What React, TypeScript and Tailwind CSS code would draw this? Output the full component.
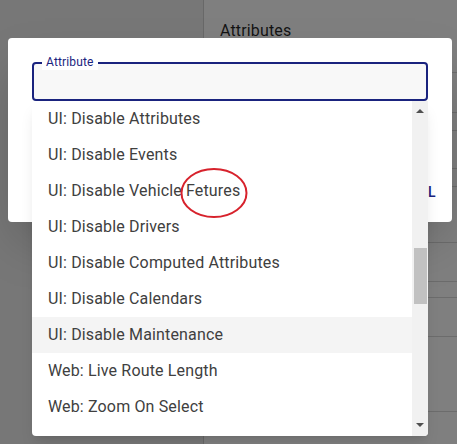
import React from "react";

const options = [
  "UI: Disable Attributes",
  "UI: Disable Events",
  "UI: Disable Vehicle Fetures",
  "UI: Disable Drivers",
  "UI: Disable Computed Attributes",
  "UI: Disable Calendars",
  "UI: Disable Maintenance",
  "Web: Live Route Length",
  "Web: Zoom On Select",
];

export default function App() {
  return (
    <div
      className="relative w-[457px] h-[444px] overflow-hidden bg-white"
      style={{ fontFamily: "Roboto, 'Liberation Sans', sans-serif" }}
    >
      {/* Page behind the modal */}
      <div className="flex h-full">
        <div className="w-[204px] shrink-0 bg-[#eeeeee] border-r border-[#d0d0d0]" />
        <div className="flex-1 flex flex-col">
          <div className="h-[73px] border-b border-[#d9d9d9] pl-4 pt-[19px]">
            <span className="text-[16px] leading-6 tracking-[0.15px] text-black/85">Attributes</span>
          </div>
          <div className="h-[40px] border-b border-[#d9d9d9]" />
          <div className="h-[18px] border-b border-[#d9d9d9]" />
          <div className="h-[38px] border-b border-[#d9d9d9]" />
          <div className="h-[18px] border-b border-[#d9d9d9]" />
          <div className="h-[56px] border-b border-[#d9d9d9]" />
          <div className="h-[39px] border-b border-[#d9d9d9]" />
          <div className="h-[16px] border-b border-[#d9d9d9]" />
          <div className="h-[39px] border-b border-[#d9d9d9]" />
          <div className="h-[75px] border-b border-[#d9d9d9]" />
        </div>
      </div>

      {/* Backdrop */}
      <div className="absolute inset-0 bg-black/50" />

      {/* Dialog */}
      <div className="absolute left-2 top-[38px] w-[444px] h-[184px] rounded bg-white shadow-2xl flex flex-col">
        <div className="px-6 pt-6">
          <div className="relative h-[39px] rounded border-2 border-[#1a237e] bg-[#f8f8f8]">
            <span className="absolute left-2 -top-[10px] px-1 bg-white text-[12px] leading-4 tracking-[0.15px] text-[#1a237e]">
              Attribute
            </span>
          </div>
        </div>
        <div className="mt-auto flex justify-end pr-4 pb-5">
          <span className="text-[14px] leading-5 font-medium tracking-wide uppercase text-[#1a237e]">
            Cancel
          </span>
        </div>
      </div>

      {/* Autocomplete popup */}
      <div className="absolute left-[32px] top-[101px] w-[396px] h-[335px] bg-white rounded-b shadow-lg flex overflow-hidden">
        <ul className="flex-1">
          {options.map((o) => (
            <li
              key={o}
              className={`h-9 px-4 flex items-center text-[16px] tracking-[0.15px] text-[#404040] ${
                o === "UI: Disable Maintenance" ? "bg-[#f4f4f4]" : ""
              }`}
            >
              {o}
            </li>
          ))}
        </ul>
        <div className="w-4 bg-[#f1f1f1] flex flex-col items-center">
          <div className="h-5 flex items-center justify-center">
            <div className="w-0 h-0 border-x-[4px] border-x-transparent border-b-[4px] border-b-[#505050]" />
          </div>
          <div className="h-[127px]" />
          <div className="w-[13px] h-[56px] bg-[#c1c1c1]" />
          <div className="flex-1" />
          <div className="h-5 flex items-center justify-center mb-[1px]">
            <div className="w-0 h-0 border-x-[4px] border-x-transparent border-t-[4px] border-t-[#505050]" />
          </div>
        </div>
      </div>

      {/* Red annotation circle */}
      <svg
        className="absolute left-[180px] top-[167px]"
        width="68"
        height="52"
        viewBox="0 0 68 52"
      >
        <ellipse
          cx="34"
          cy="26"
          rx="32.5"
          ry="24"
          fill="none"
          stroke="#d7222c"
          strokeWidth="2"
        />
      </svg>
    </div>
  );
}
